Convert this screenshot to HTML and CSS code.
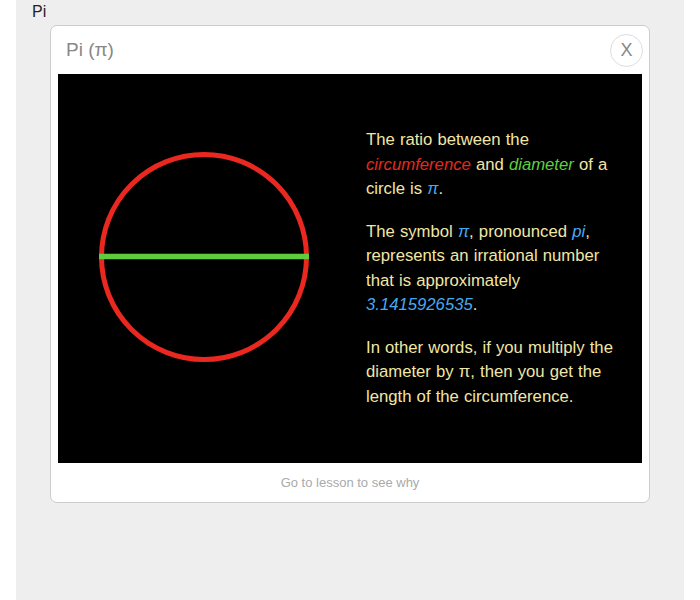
FILE: index.html
```html
<!DOCTYPE html>
<html>
<head>
<meta charset="utf-8">
<link rel="stylesheet" href="styles.css">
</head>
<body>
<div class="page">
  <div class="label">Pi</div>
  <div class="card">
    <div class="card-header">
      <div class="title">Pi (π)</div>
      <div class="close">X</div>
    </div>
    <div class="stage">
      <svg class="figure" width="308" height="389" viewBox="0 0 308 389">
        <circle cx="146" cy="183" r="102.5" fill="none" stroke="#ea2820" stroke-width="5"/>
        <line x1="41" y1="182.5" x2="251" y2="182.5" stroke="#5fcc3e" stroke-width="5.5"/>
      </svg>
      <div class="text">
        <p>The ratio between the <em class="red">circumference</em> and <em class="green">diameter</em> of a circle is <em class="blue">π</em>.</p>
        <p>The symbol <em class="blue">π</em>, pronounced <em class="blue">pi</em>, represents an irrational number that is approximately <em class="blue">3.1415926535</em>.</p>
        <p>In other words, if you multiply the diameter by π, then you get the length of the circumference.</p>
      </div>
    </div>
    <div class="card-footer">Go to lesson to see why</div>
  </div>
</div>
</body>
</html>
```

FILE: styles.css
```css
html, body {
  margin: 0;
  padding: 0;
  background: #ffffff;
  font-family: "Liberation Sans", Arial, sans-serif;
}

.page {
  margin: 0 16px;
  height: 600px;
  background: #eeeeee;
  padding: 3px 0 0 16px;
  box-sizing: border-box;
}

.label {
  font-size: 16px;
  line-height: 18px;
  color: #222222;
}

.card {
  margin: 4px 0 0 18px;
  width: 600px;
  box-sizing: border-box;
  background: #ffffff;
  border: 1px solid #cccccc;
  border-radius: 7px;
  padding: 0 7px;
}

.card-header {
  height: 48px;
  display: flex;
  align-items: center;
  justify-content: space-between;
  padding-left: 8px;
}

.title {
  font-size: 19px;
  color: #888888;
}

.close {
  width: 31px;
  height: 31px;
  border: 1px solid #dddddd;
  border-radius: 50%;
  display: flex;
  align-items: center;
  justify-content: center;
  font-size: 18px;
  color: #888888;
  margin-right: -1px;
}

.stage {
  height: 389px;
  background: #000000;
  display: flex;
  align-items: center;
}

.figure {
  display: block;
  flex: none;
}

.text {
  width: 260px;
  font-size: 16.7px;
  line-height: 24.5px;
  word-spacing: 0.5px;
  color: #f2e6a6;
}

.text p {
  margin: 0 0 18px;
}

.text p:last-child {
  margin-bottom: 0;
}

.red { color: #e8281f; }
.green { color: #5fcf3e; }
.blue { color: #45aaf2; }

.card-footer {
  height: 39px;
  display: flex;
  align-items: center;
  justify-content: center;
  font-size: 13px;
  color: #aaaaaa;
}
```
